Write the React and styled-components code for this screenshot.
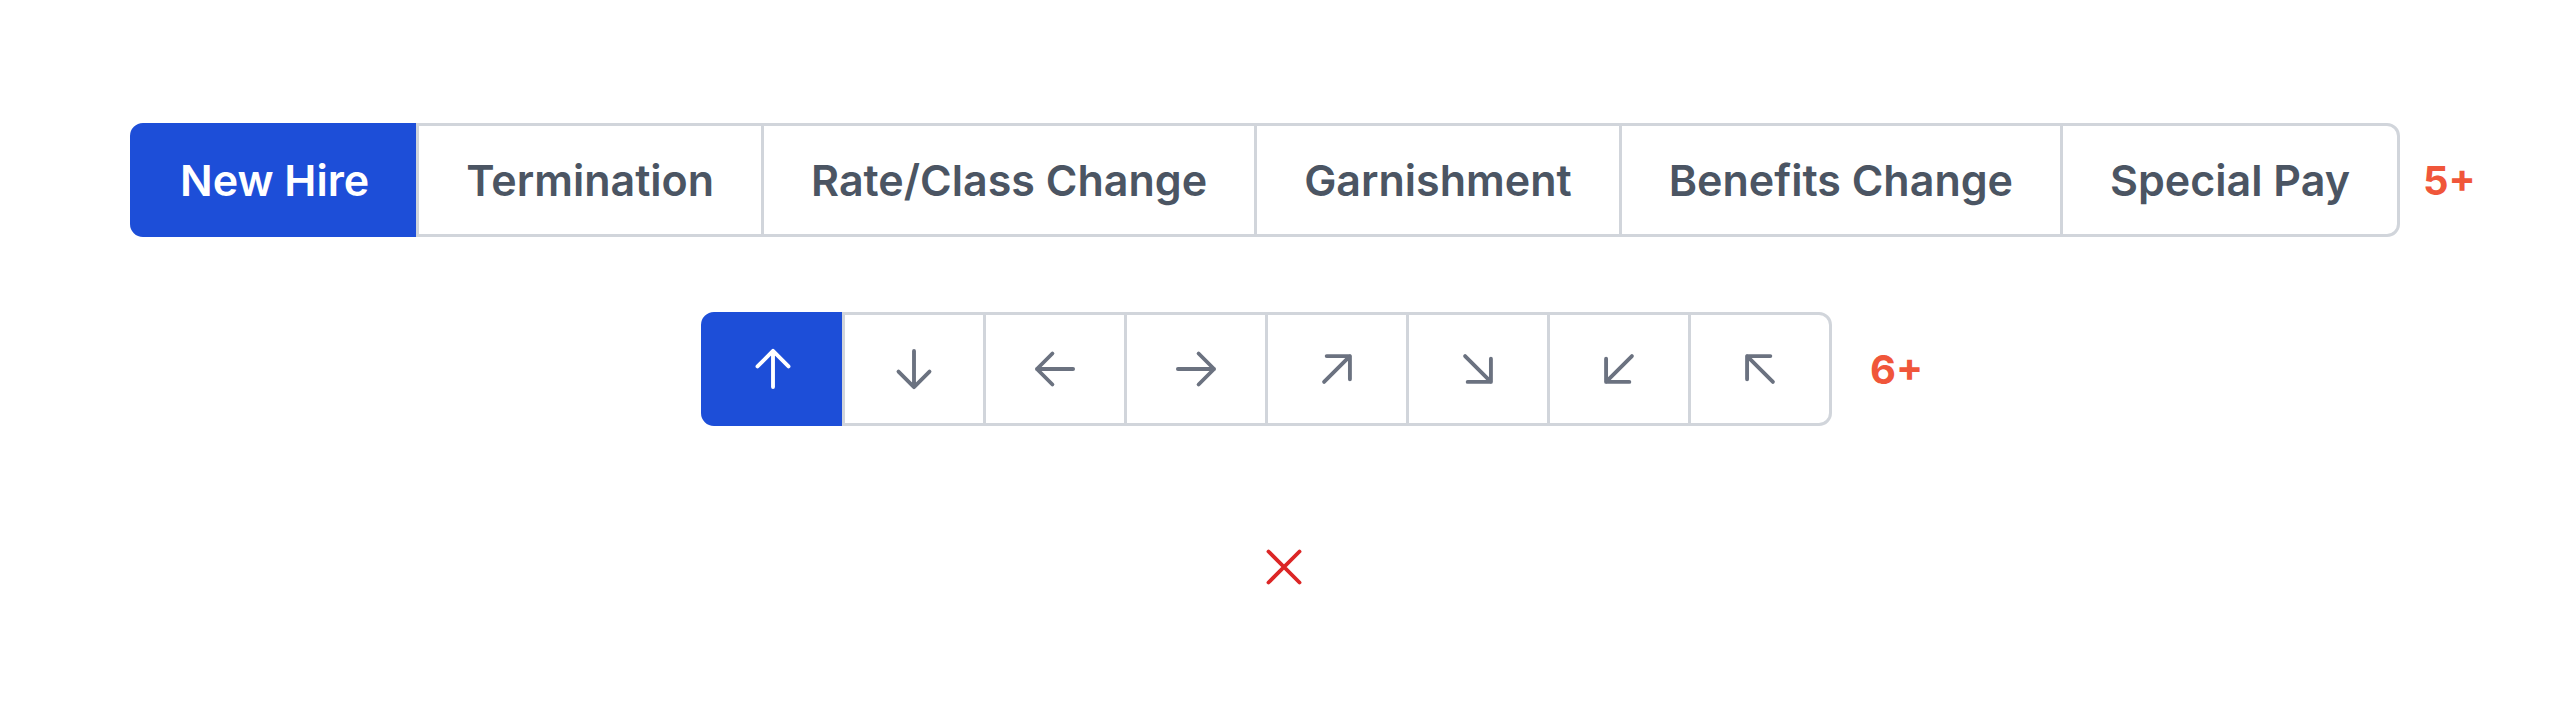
import React, { useState } from 'react';
import styled, { createGlobalStyle } from 'styled-components';

const GlobalStyle = createGlobalStyle`
  html, body {
    margin: 0;
    padding: 0;
    background: #ffffff;
  }
  body {
    font-family: Inter, "Noto Sans", "Liberation Sans", sans-serif;
  }
`;

const Page = styled.div`
  min-height: 100vh;
  padding-top: 123px;
  box-sizing: border-box;
  display: flex;
  flex-direction: column;
  align-items: center;
`;

const Row = styled.div`
  display: flex;
  justify-content: center;
  align-items: center;
  width: 100%;
  margin-bottom: ${(p) => p.$gap || 0}px;
`;

const Group = styled.div`
  display: flex;
  align-items: stretch;
`;

const Segment = styled.button`
  height: 114px;
  box-sizing: border-box;
  margin: 0 0 0 -3px;
  border: 3px solid ${(p) => (p.$active ? '#1d4ed8' : '#d1d5db')};
  background: ${(p) => (p.$active ? '#1d4ed8' : '#ffffff')};
  color: ${(p) => (p.$active ? '#ffffff' : '#4b5563')};
  display: flex;
  align-items: center;
  justify-content: center;
  cursor: pointer;
  border-radius: 0;

  &:first-child {
    margin-left: 0;
    border-radius: 13px 0 0 13px;
  }
  &:last-child {
    border-radius: 0 13px 13px 0;
  }
`;

const TextSegment = styled(Segment)`
  padding: 0 47px;
  font-family: Inter, "Noto Sans", "Liberation Sans", sans-serif;
  font-size: 43px;
  font-weight: 600;
  white-space: nowrap;
`;

const IconSegment = styled(Segment)`
  width: 144px;
  padding: 0;
  color: ${(p) => (p.$active ? '#ffffff' : '#6b7280')};
`;

const Slot = styled.div`
  position: relative;
  width: ${(p) => p.$width}px;
  align-self: stretch;
`;

const Count = styled.span`
  position: absolute;
  top: 50%;
  left: ${(p) => p.$offset}px;
  transform: translateY(-50%);
  font-family: Inter, "Noto Sans", "Liberation Sans", sans-serif;
  font-size: 40px;
  font-weight: 700;
  color: #f0563a;
  white-space: nowrap;
`;

const CloseMark = styled.div`
  margin-top: 110px;
  color: #dc2626;
  display: flex;
`;

const Icon = ({ d, size = 62, stroke = 1.5 }) => (
  <svg width={size} height={size} viewBox="0 0 24 24" fill="none" stroke="currentColor"
    strokeWidth={stroke} strokeLinecap="round" strokeLinejoin="round">
    <path d={d} />
  </svg>
);

const tabs = ['New Hire', 'Termination', 'Rate/Class Change', 'Garnishment', 'Benefits Change', 'Special Pay'];

const arrows = [
  { key: 'up', d: 'M12 5v14M18 11l-6-6M6 11l6-6' },
  { key: 'down', d: 'M12 5v14M18 13l-6 6M6 13l6 6' },
  { key: 'left', d: 'M5 12h14M5 12l6 6M5 12l6-6' },
  { key: 'right', d: 'M5 12h14M13 18l6-6M13 6l6 6' },
  { key: 'up-right', d: 'M17 7L7 17M8 7h9v9' },
  { key: 'down-right', d: 'M7 7l10 10M17 8v9H8' },
  { key: 'down-left', d: 'M17 7L7 17M16 17H7V8' },
  { key: 'up-left', d: 'M7 7l10 10M16 7H7v9' },
];

export default function App() {
  const [tab, setTab] = useState('New Hire');
  const [dir, setDir] = useState('up');

  return (
    <>
      <GlobalStyle />
      <Page>
        <Row $gap={75}>
          <Group>
            {tabs.map((t) => (
              <TextSegment key={t} $active={tab === t} onClick={() => setTab(t)}>{t}</TextSegment>
            ))}
          </Group>
          <Slot $width={38}>
            <Count $offset={23}>5+</Count>
          </Slot>
        </Row>

        <Row>
          <Group>
            {arrows.map((a) => (
              <IconSegment key={a.key} $active={dir === a.key} onClick={() => setDir(a.key)}>
                <Icon d={a.d} />
              </IconSegment>
            ))}
          </Group>
          <Slot $width={35}>
            <Count $offset={38}>6+</Count>
          </Slot>
        </Row>

        <CloseMark>
          <Icon d="M18 6L6 18M6 6l12 12" />
        </CloseMark>
      </Page>
    </>
  );
}
